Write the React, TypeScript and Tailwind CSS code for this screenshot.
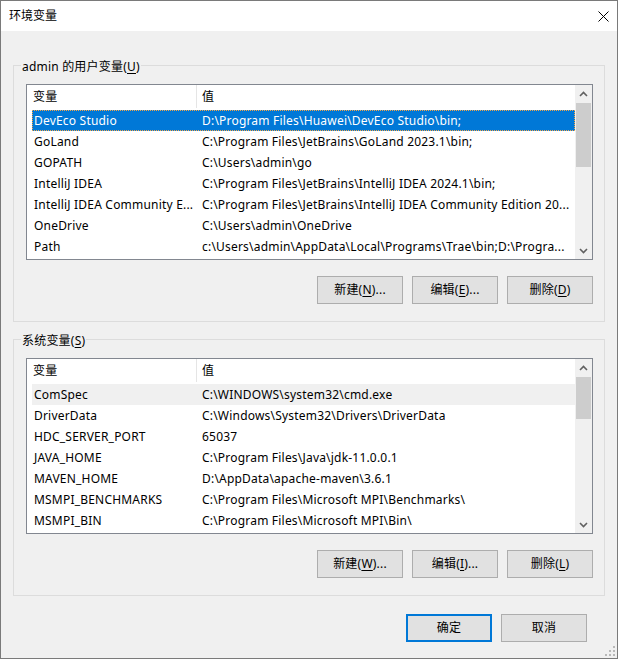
import React from "react";

type Row = [string, string];

const userRows: Row[] = [
  ["DevEco Studio", "D:\\Program Files\\Huawei\\DevEco Studio\\bin;"],
  ["GoLand", "C:\\Program Files\\JetBrains\\GoLand 2023.1\\bin;"],
  ["GOPATH", "C:\\Users\\admin\\go"],
  ["IntelliJ IDEA", "C:\\Program Files\\JetBrains\\IntelliJ IDEA 2024.1\\bin;"],
  ["IntelliJ IDEA Community E...", "C:\\Program Files\\JetBrains\\IntelliJ IDEA Community Edition 20..."],
  ["OneDrive", "C:\\Users\\admin\\OneDrive"],
  ["Path", "c:\\Users\\admin\\AppData\\Local\\Programs\\Trae\\bin;D:\\Progra..."],
];

const sysRows: Row[] = [
  ["ComSpec", "C:\\WINDOWS\\system32\\cmd.exe"],
  ["DriverData", "C:\\Windows\\System32\\Drivers\\DriverData"],
  ["HDC_SERVER_PORT", "65037"],
  ["JAVA_HOME", "C:\\Program Files\\Java\\jdk-11.0.0.1"],
  ["MAVEN_HOME", "D:\\AppData\\apache-maven\\3.6.1"],
  ["MSMPI_BENCHMARKS", "C:\\Program Files\\Microsoft MPI\\Benchmarks\\"],
  ["MSMPI_BIN", "C:\\Program Files\\Microsoft MPI\\Bin\\"],
];

function Chevron({ up }: { up: boolean }) {
  return (
    <svg width="9" height="6" viewBox="0 0 9 6">
      <path
        d={up ? "M1 5 L4.5 1.5 L8 5" : "M1 1 L4.5 4.5 L8 1"}
        fill="none"
        stroke="#606060"
        strokeWidth="1.6"
      />
    </svg>
  );
}

function ListView({
  rows,
  focused,
  thumbHeight,
}: {
  rows: Row[];
  focused: boolean;
  thumbHeight: number;
}) {
  return (
    <div className="w-[567px] h-[176px] border border-[#828790] bg-white flex">
      <div className="flex-1 flex flex-col overflow-hidden">
        <div className="h-[25px] flex shrink-0">
          <div className="w-[170px] h-[23px] border-r border-[#e5e5e5] pl-[6px] flex items-center">
            变量
          </div>
          <div className="pl-[5px] h-[23px] flex items-center">值</div>
        </div>
        {rows.map((r, i) => {
          const sel = i === 0;
          const cls = sel
            ? focused
              ? "bg-[#0078d7] text-white outline-1 outline-dotted outline-[#f3a64a] -outline-offset-1"
              : "bg-[#f0f0f0] text-black"
            : "text-black";
          return (
            <div
              key={r[0]}
              className={`h-[21px] ml-[5px] w-[543px] flex items-center shrink-0 ${cls}`}
            >
              <div className="w-[170px] pl-[2px] whitespace-nowrap overflow-hidden">{r[0]}</div>
              <div className="flex-1 whitespace-nowrap overflow-hidden">{r[1]}</div>
            </div>
          );
        })}
      </div>
      <div className="w-[17px] bg-[#f0f0f0] flex flex-col shrink-0">
        <div className="h-[17px] flex items-center justify-center">
          <Chevron up />
        </div>
        <div className="flex-1 flex flex-col items-center pt-[1px]">
          <div className="w-[15px] bg-[#cdcdcd]" style={{ height: thumbHeight }} />
        </div>
        <div className="h-[17px] flex items-center justify-center">
          <Chevron up={false} />
        </div>
      </div>
    </div>
  );
}

function Btn({ label, acc, dots, primary }: { label: string; acc?: string; dots?: boolean; primary?: boolean }) {
  return (
    <div
      className={`w-[86px] h-[28px] bg-[#e1e1e1] flex items-center justify-center text-black ${
        primary ? "border-2 border-[#0078d7]" : "border border-[#adadad]"
      }`}
    >
      <span className="whitespace-nowrap">
        {label}
        {acc && (
          <>
            (<span className="underline underline-offset-2">{acc}</span>)
          </>
        )}
        {dots && "..."}
      </span>
    </div>
  );
}

function Group({
  title,
  acc,
  rows,
  focused,
  thumbHeight,
  btnAcc,
  className,
}: {
  title: string;
  acc: string;
  rows: Row[];
  focused: boolean;
  thumbHeight: number;
  btnAcc: [string, string, string];
  className?: string;
}) {
  return (
    <fieldset className={`border border-[#dcdcdc] pl-[7px] pr-[11px] pb-[17px] ${className ?? ""}`}>
      <legend className="px-[1px] leading-[16px]">
        <span className="inline-block translate-y-[2px]">
          {title}(<span className="underline underline-offset-2">{acc}</span>)
        </span>
      </legend>
      <div className="pl-[5px] pt-[11px] flex flex-col">
        <ListView rows={rows} focused={focused} thumbHeight={thumbHeight} />
        <div className="mt-[16px] flex justify-end gap-[9px]">
          <Btn label="新建" acc={btnAcc[0]} dots />
          <Btn label="编辑" acc={btnAcc[1]} dots />
          <Btn label="删除" acc={btnAcc[2]} />
        </div>
      </div>
    </fieldset>
  );
}

export default function App() {
  return (
    <div className="w-[618px] h-[659px] border border-[#7a7a7a] bg-[#f0f0f0] flex flex-col relative text-[12px] tracking-[0.2px] text-black font-['Noto_Sans','Noto_Sans_CJK_SC',sans-serif] overflow-hidden">
      <div className="h-[30px] bg-white flex items-center justify-between pl-[8px] pr-[8px] shrink-0">
        <span className="tracking-normal">环境变量</span>
        <svg width="11" height="11" viewBox="0 0 11 11">
          <path d="M0.5 0.5 L10.5 10.5 M10.5 0.5 L0.5 10.5" stroke="#000" strokeWidth="1" />
        </svg>
      </div>
      <div className="flex-1 flex flex-col px-[12px] pt-[26px]">
        <Group
          title="admin 的用户变量"
          acc="U"
          rows={userRows}
          focused
          thumbHeight={64}
          btnAcc={["N", "E", "D"]}
        />
        <Group
          title="系统变量"
          acc="S"
          rows={sysRows}
          focused={false}
          thumbHeight={42}
          btnAcc={["W", "I", "L"]}
          className="mt-[9px]"
        />
        <div className="mt-[18px] flex justify-end gap-[9px] pr-[18px]">
          <Btn label="确定" primary />
          <Btn label="取消" />
        </div>
      </div>
      <svg className="absolute right-[2px] bottom-[2px]" width="10" height="10" viewBox="0 0 10 10">
        <rect x="8" y="0" width="2" height="2" fill="#b8b8b8" />
        <rect x="4" y="4" width="2" height="2" fill="#b8b8b8" />
        <rect x="8" y="4" width="2" height="2" fill="#b8b8b8" />
        <rect x="0" y="8" width="2" height="2" fill="#b8b8b8" />
        <rect x="4" y="8" width="2" height="2" fill="#b8b8b8" />
        <rect x="8" y="8" width="2" height="2" fill="#b8b8b8" />
      </svg>
    </div>
  );
}
